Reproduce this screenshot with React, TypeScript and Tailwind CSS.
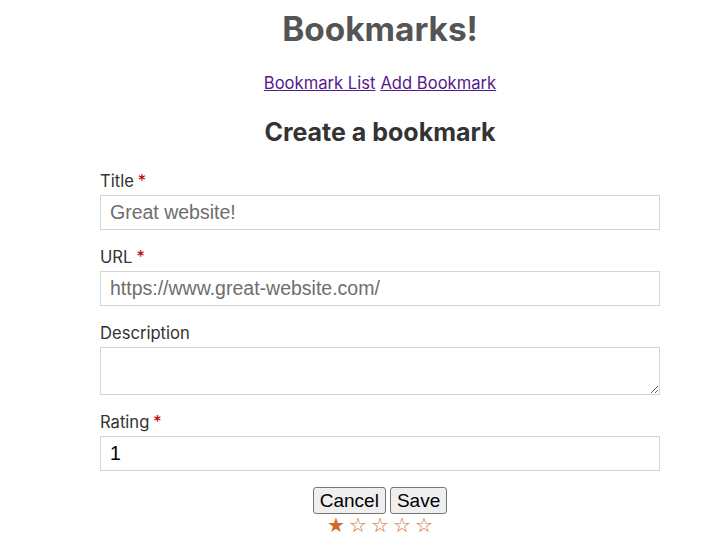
import React from 'react';

export default function App() {
  const rating = 1;
  return (
    <div className="min-h-screen bg-white pl-[35px] font-['Inter',sans-serif]">
      <div className="flex flex-col items-center">
        <h1 className="mt-[9px] text-[33.4px] leading-[40px] font-bold text-[#555555]">Bookmarks!</h1>
        <nav className="mt-[22px] flex gap-[5px] text-[16.6px] leading-[24px]">
          <a href="#" className="text-[#551a8b] underline">Bookmark List</a>
          <a href="#" className="text-[#551a8b] underline">Add Bookmark</a>
        </nav>
        <h2 className="mt-[21px] text-[25px] leading-[32px] font-bold text-[#333333]">Create a bookmark</h2>
      </div>

      <form className="mx-auto mt-[21px] w-[560px] text-[#333333]">
        <Field label="Title" required>
          <input
            className="h-[35px] w-full border border-[#d4d4d4] px-[9px] font-['Liberation_Sans',sans-serif] text-[19.5px] text-[#333] placeholder:text-[#6e6e6e] outline-none"
            placeholder="Great website!"
          />
        </Field>
        <Field label="URL" required>
          <input
            className="h-[35px] w-full border border-[#d4d4d4] px-[9px] font-['Liberation_Sans',sans-serif] text-[19.5px] text-[#333] placeholder:text-[#6e6e6e] outline-none"
            placeholder="https://www.great-website.com/"
          />
        </Field>
        <Field label="Description">
          <textarea className="block h-[48px] w-full border border-[#d4d4d4] px-[9px] font-['Liberation_Sans',sans-serif] text-[19.5px] outline-none" />
        </Field>
        <Field label="Rating" required>
          <input
            className="h-[35px] w-full border border-[#d4d4d4] px-[9px] font-['Liberation_Sans',sans-serif] text-[19.5px] text-black outline-none"
            defaultValue="1"
          />
        </Field>

        <div className="mt-[16px] flex justify-center gap-[4px] font-['Liberation_Sans',sans-serif] text-[19px] leading-[20px] text-black">
          <button type="button" className="h-[27px] rounded-[3px] border border-[#767676] bg-[#efefef] px-[6px]">Cancel</button>
          <button type="button" className="h-[27px] rounded-[3px] border border-[#767676] bg-[#efefef] px-[6px]">Save</button>
        </div>
        <div className="flex justify-center font-['DejaVu_Sans',sans-serif] text-[20px] leading-[22px] text-[#d2691e]">
          {[1, 2, 3, 4, 5].map((n) => (
            <span key={n} className="w-[22px] text-center">{n <= rating ? '★' : '☆'}</span>
          ))}
        </div>
      </form>
    </div>
  );
}

function Field({ label, required, children }: { label: string; required?: boolean; children: React.ReactNode }) {
  return (
    <div className="mb-[15px]">
      <label className="mb-[2px] block text-[16.6px] leading-[24px] text-[#333333]">
        {label}
        {required && <span className="ml-[4px] text-[#c00000]">*</span>}
      </label>
      {children}
    </div>
  );
}
